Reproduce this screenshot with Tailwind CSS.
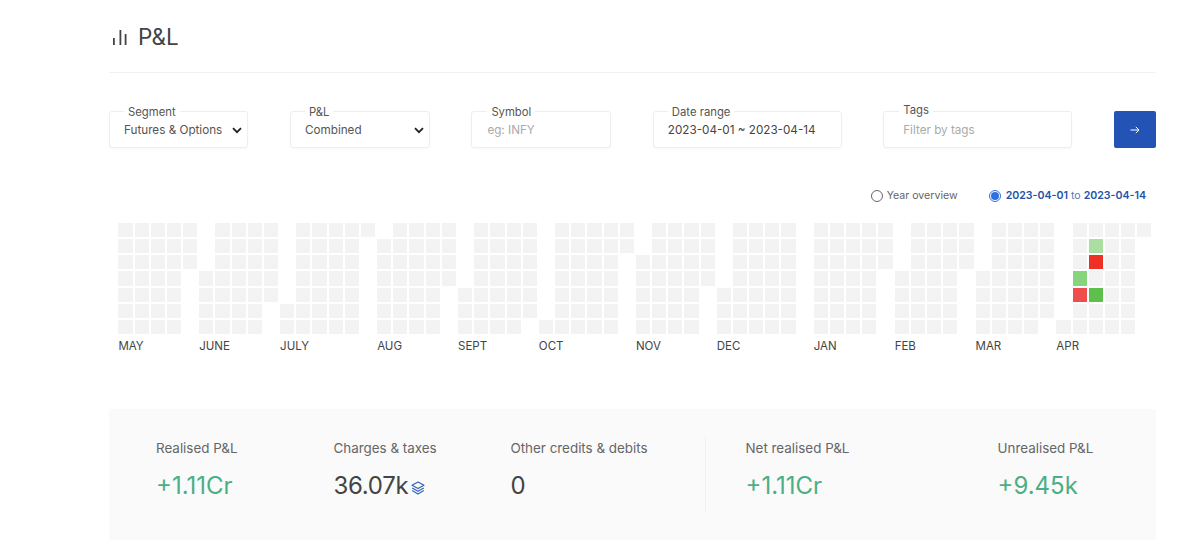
<!DOCTYPE html>
<html>
<head>
<script src="https://cdn.jsdelivr.net/npm/@tailwindcss/browser@4"></script>
</head>
<body class="bg-white text-[#444] font-['Inter',sans-serif] overflow-hidden">

<div class="ml-[109px] w-[1047px]">

<header class="h-[73px] border-b border-[#f2f2f2] flex items-start pt-[25px]">
    <svg class="ml-[3px] mt-[5px] w-[16px] h-[16px]" viewBox="0 0 16 16" fill="#444">
        <rect x="1" y="8" width="1.8" height="7"/>
        <rect x="7.5" y="0" width="1.8" height="15"/>
        <rect x="12.7" y="4" width="1.8" height="11"/>
    </svg>
    <h1 class="ml-[10px] text-[22.5px] leading-[24px] text-[#444]">P&amp;L</h1>
</header>

<div class="mt-[38px] flex gap-[41.6px] text-[11.7px]">
    <div class="relative w-[139.5px] h-[37px] border border-[#eeeeee] rounded-[3px] shadow-[0_1px_2px_rgba(0,0,0,0.03)] flex items-center justify-between pl-[14px] pr-[5px]">
        <span class="absolute left-[14px] top-[-6px] px-[4px] bg-white text-[11.3px] leading-[13px] text-[#555]">Segment</span>
        <span class="text-[#555] mt-[2px]">Futures &amp; Options</span>
        <svg class="w-[10px] h-[7px] mt-[2px]" viewBox="0 0 10 7" fill="none" stroke="#222" stroke-width="1.8"><path d="M1 1.2 5 5.2l4-4"/></svg>
    </div>
    <div class="relative w-[140px] h-[37px] border border-[#eeeeee] rounded-[3px] shadow-[0_1px_2px_rgba(0,0,0,0.03)] flex items-center justify-between pl-[14px] pr-[5px]">
        <span class="absolute left-[14px] top-[-6px] px-[4px] bg-white text-[11.3px] leading-[13px] text-[#555]">P&amp;L</span>
        <span class="text-[#555] mt-[2px]">Combined</span>
        <svg class="w-[10px] h-[7px] mt-[2px]" viewBox="0 0 10 7" fill="none" stroke="#222" stroke-width="1.8"><path d="M1 1.2 5 5.2l4-4"/></svg>
    </div>
    <div class="relative w-[140px] h-[37px] border border-[#eeeeee] rounded-[3px] shadow-[0_1px_2px_rgba(0,0,0,0.03)] flex items-center pl-[15px]">
        <span class="absolute left-[15px] top-[-6px] px-[4px] bg-white text-[11.3px] leading-[13px] text-[#555]">Symbol</span>
        <input class="w-full mt-[2px] outline-none bg-transparent placeholder:text-[#aaa]" placeholder="eg: INFY">
    </div>
    <div class="relative w-[189px] h-[37px] border border-[#eeeeee] rounded-[3px] shadow-[0_1px_2px_rgba(0,0,0,0.03)] flex items-center pl-[14px]">
        <span class="absolute left-[14px] top-[-6px] px-[4px] bg-white text-[11.3px] leading-[13px] text-[#555]">Date range</span>
        <span class="text-[#444] mt-[2px]">2023-04-01 ~ 2023-04-14</span>
    </div>
    <div class="relative w-[189.5px] h-[37px] border border-[#eeeeee] rounded-[3px] shadow-[0_1px_2px_rgba(0,0,0,0.03)] flex items-center pl-[19px]">
        <span class="absolute left-[15px] top-[-8px] px-[4px] bg-white text-[11.3px] leading-[13px] text-[#555]">Tags</span>
        <input class="w-full mt-[2px] outline-none bg-transparent placeholder:text-[#aaa]" placeholder="Filter by tags">
    </div>
    <button class="w-[42px] h-[37px] rounded-[2px] bg-[#2353b4] flex items-center justify-center">
        <svg class="w-[10px] h-[10px]" viewBox="0 0 10 10" fill="none" stroke="#fff" stroke-width="1"><path d="M0.5 5h8.5M5.8 1.8 9 5 5.8 8.2"/></svg>
    </button>
</div>

<div class="mt-[40px] h-[16px] flex justify-end items-center text-[10.6px] pr-[10px]">
    <span class="w-[12px] h-[12px] rounded-full border border-[#666] bg-white"></span>
    <span class="ml-[4px] text-[#666]">Year overview</span>
    <span class="ml-[31px] w-[12px] h-[12px] rounded-full border border-[#2f6fe0] flex items-center justify-center">
        <span class="w-[8px] h-[8px] rounded-full bg-[#2f6fe0]"></span>
    </span>
    <span class="ml-[5px] text-[#5a78b8]"><b class="font-semibold text-[#2353a8]">2023-04-01</b> to <b class="font-semibold text-[#2353a8]">2023-04-14</b></span>
</div>

<div id="heatmap" class="mt-[19px] ml-[9.4px] grid grid-cols-[repeat(64,14.18px)] auto-rows-[14.17px] gap-[2px]"></div>

<div class="mt-[59px] h-[131px] bg-[#fafafa] flex pt-[30px]">
    <div class="ml-[47px] w-[177.5px]">
        <p class="text-[13.4px] leading-[18px] text-[#666]">Realised P&amp;L</p>
        <p class="mt-[14px] text-[24px] leading-[30px] text-[#4cae85]">+1.11Cr</p>
    </div>
    <div class="w-[177px]">
        <p class="text-[13.4px] leading-[18px] text-[#666]">Charges &amp; taxes</p>
        <p class="mt-[14px] text-[24px] leading-[30px] tracking-[-0.3px] text-[#444] flex items-center">36.07k
            <svg class="ml-[3px] mt-[3px] w-[14px] h-[14px]" viewBox="0 0 14 14" fill="none" stroke="#2f5fb8" stroke-width="1.1" stroke-linejoin="round">
                <path d="M7 1 13 4.3 7 7.6 1 4.3Z"/>
                <path d="M1.2 7 7 10.2 12.8 7"/>
                <path d="M1.2 9.6 7 12.9 12.8 9.6"/>
            </svg>
        </p>
    </div>
    <div class="w-[194px]">
        <p class="text-[13.4px] leading-[18px] text-[#666]">Other credits &amp; debits</p>
        <p class="mt-[14px] text-[24px] leading-[30px] text-[#444]">0</p>
    </div>
    <div class="w-[293px] h-[75px] -mt-[2px] border-l border-[#f0f0f0] pl-[40px] pt-[2px]">
        <p class="text-[13.4px] leading-[18px] text-[#666]">Net realised P&amp;L</p>
        <p class="mt-[14px] text-[24px] leading-[30px] text-[#4cae85]">+1.11Cr</p>
    </div>
    <div>
        <p class="text-[13.4px] leading-[18px] text-[#666]">Unrealised P&amp;L</p>
        <p class="mt-[14px] text-[24px] leading-[30px] text-[#4cae85]">+9.45k</p>
    </div>
</div>

</div>

<script>
// [first row, last row, first col, last col]
const blocks=[
    [0,2,0,4],[3,6,0,3],
    [0,2,6,9],[3,4,5,9],[5,6,5,8],
    [5,6,10,10],[0,6,11,14],[0,0,15,15],
    [0,0,17,20],[1,3,16,20],[4,6,16,19],
    [0,3,22,25],[4,5,21,25],[6,6,21,24],
    [6,6,26,26],[0,6,27,30],[0,1,31,31],
    [0,1,33,36],[2,3,32,36],[4,6,32,35],
    [0,3,38,41],[4,6,37,41],
    [0,2,43,47],[3,6,43,46],
    [0,2,49,52],[3,6,48,51],
    [0,2,54,57],[3,5,53,57],[6,6,53,56],
    [0,0,59,63],[1,5,59,62],[6,6,58,62]
]
const colored={'1-60':'bg-[#a9e0a0]','2-60':'bg-[#ee3124]','3-59':'bg-[#86d47c]','4-59':'bg-[#f04e4e]','4-60':'bg-[#5cc04a]'}
const months=[['MAY',0],['JUNE',5],['JULY',10],['AUG',16],['SEPT',21],['OCT',26],['NOV',32],['DEC',37],['JAN',43],['FEB',48],['MAR',53],['APR',58]]

const h=document.getElementById('heatmap')
let out=''
blocks.forEach(([r1,r2,c1,c2])=>{
    for(let r=r1;r<=r2;r++){
        for(let c=c1;c<=c2;c++){
            const color=colored[r+'-'+c]||'bg-[#f3f3f3]'
            out+=`<div class="${color}" style="grid-row:${r+1};grid-column:${c+1}"></div>`
        }
    }
})
months.forEach(([name,c])=>{
    out+=`<div class="mt-[3px] text-[11.5px] leading-[14px] text-[#444] whitespace-nowrap" style="grid-row:8;grid-column:${c+1}/span 4">${name}</div>`
})
h.innerHTML=out
</script>

</body>
</html>
